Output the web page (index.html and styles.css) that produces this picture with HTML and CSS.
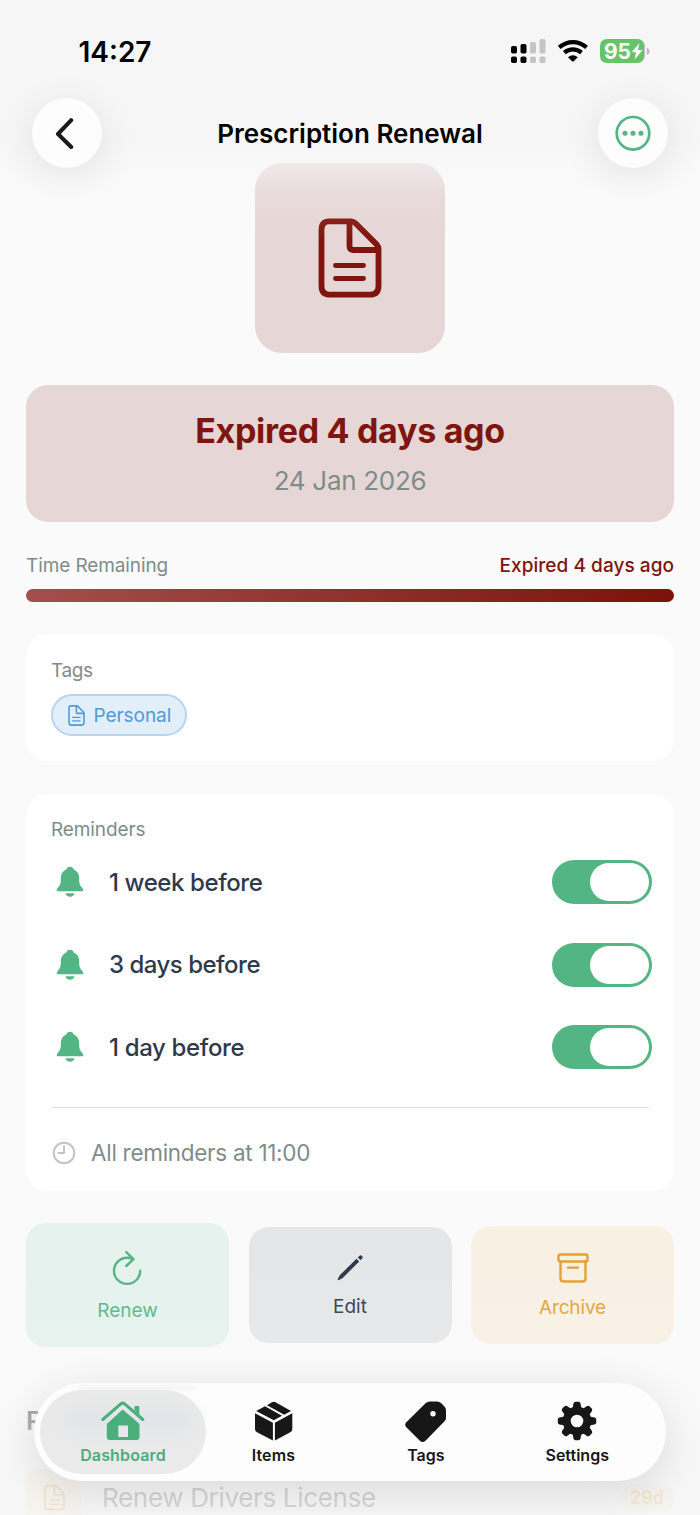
FILE: index.html
```html
<!DOCTYPE html>
<html lang="en">
<head>
<meta charset="utf-8">
<title>Prescription Renewal</title>
<link rel="stylesheet" href="styles.css">
</head>
<body>
<svg class="defs" width="0" height="0">
  <symbol id="doc" viewBox="0 0 64 80">
    <path d="M11 3.300H33Q35.500 3.300 37.500 5.300L58.800 26.600Q60.500 28.500 60.500 31V68Q60.500 76.700 51.800 76.700H12Q3.500 76.700 3.500 68V12Q3.500 3.300 11 3.300Z"/>
    <path d="M31.500 4V28Q31.500 32 35.500 32H59.500"/>
    <path class="doc-lines" d="M17.500 47.500H45.500M17.500 60.500H45.500"/>
  </symbol>
  <symbol id="bell" viewBox="0 0 28 32">
    <path d="M14 .7C16 .7 17.400 1.900 17.700 3.400C21.500 5 23.200 8.300 23.200 12V14.500C23.200 18.500 24.600 20 26.300 22C28 24 27.500 25.200 25.800 25.200H2.200C.5 25.200 0 24 1.700 22C3.400 20 4.800 18.500 4.800 14.500V12C4.800 8.300 6.500 5 10.300 3.400C10.600 1.900 12 .7 14 .7ZM9.500 27.200H18.500C18 29.400 16.300 30.700 14 30.700S10 29.400 9.500 27.200Z"/>
  </symbol>
</svg>
<div class="screen">
  <main class="content">
    <div class="hero"><svg class="hero-icon" width="64" height="80"><use href="#doc"/></svg></div>
    <section class="status">
      <h1 class="status-title">Expired 4 days ago</h1>
      <div class="status-date">24 Jan 2026</div>
    </section>
    <div class="remaining">
      <span class="remaining-label">Time Remaining</span>
      <span class="remaining-value">Expired 4 days ago</span>
    </div>
    <div class="progress"></div>
    <section class="card tags">
      <h2 class="card-title tags-title">Tags</h2>
      <div class="chip"><svg class="chip-icon" width="17" height="21"><use href="#doc"/></svg><span class="chip-text">Personal</span></div>
    </section>
    <section class="card reminders">
      <h2 class="card-title reminders-title">Reminders</h2>
      <div class="row"><svg class="bell" width="28" height="32"><use href="#bell"/></svg><span class="row-text week">1 week before</span><span class="toggle"><i class="knob"></i></span></div>
      <div class="row"><svg class="bell" width="28" height="32"><use href="#bell"/></svg><span class="row-text days">3 days before</span><span class="toggle"><i class="knob"></i></span></div>
      <div class="row"><svg class="bell" width="28" height="32"><use href="#bell"/></svg><span class="row-text day">1 day before</span><span class="toggle"><i class="knob"></i></span></div>
      <div class="at">
        <svg class="clock" width="24" height="24" viewBox="0 0 24 24"><circle cx="12" cy="12" r="10.300"/><path d="M12 5.200V12H6.500"/></svg>
        <span class="at-text">All reminders at 11:00</span>
      </div>
    </section>
    <div class="actions">
      <div class="action renew">
        <svg width="30" height="36" viewBox="0 0 30 36"><path d="M28.200 20.700A13.100 13.100 0 1 1 15 7.700Q18 7.700 21 8.800M14.200 2L21.500 9.200L14.200 16"/></svg>
        <span class="action-text">Renew</span>
      </div>
      <div class="action edit">
        <svg width="28" height="28" viewBox="0 0 28 28"><path d="M2.300 26.300L1.600 25.600L3.700 21.300L20.500 4.700L23.200 7.400L6.500 24.200ZM21.800 3.500L23.400 1.900Q24.700 .8 26 2T26.100 4.600L24.500 6.200Z"/></svg>
        <span class="action-text">Edit</span>
      </div>
      <div class="action archive">
        <svg width="32" height="30" viewBox="0 0 32 30"><rect x="1.500" y="1.500" width="29" height="7" rx="1.800"/><path d="M3.500 8.500V25.500Q3.500 28.500 6.500 28.500H25.500Q28.500 28.500 28.500 25.500V8.500M11 14.600H21"/></svg>
        <span class="action-text">Archive</span>
      </div>
    </div>
    <h2 class="related">Related Items</h2>
    <div class="related-row">
      <div class="related-icon"><svg width="21" height="27"><use href="#doc"/></svg></div>
      <span class="related-text">Renew Drivers License</span>
      <span class="badge">29d</span>
    </div>
  </main>

  <header class="top">
    <div class="statusbar">
      <span class="time">14:27</span>
      <svg class="system" width="140" height="26" viewBox="0 0 140 26">
        <g><rect x="1" y="7" width="6" height="7.500" rx="1.800"/><rect x="10.500" y="5" width="6" height="9.500" rx="1.800"/><rect x="1" y="17.500" width="6" height="6.500" rx="1.800"/><rect x="10.500" y="17.500" width="6" height="6.500" rx="1.800"/></g>
        <g fill="#c5c5c5"><rect x="20" y="3" width="6" height="11.500" rx="1.800"/><rect x="29.500" y="0" width="6" height="14.500" rx="1.800"/><rect x="20" y="17.500" width="6" height="6.500" rx="1.800"/><rect x="29.500" y="17.500" width="6" height="6.500" rx="1.800"/></g>
        <g fill="none" stroke="#000" stroke-width="4.200"><path d="M49.200 8.300Q55.500 3.100 62.900 3.100T76.600 8.300"/><path d="M54.300 13.600Q58.200 10.400 62.900 10.400T71.500 13.600"/></g>
        <path d="M58 18.200Q60.400 16.300 62.900 16.300T67.800 18.200L63.700 22.300Q62.900 23 62.100 22.300Z"/>
        <path fill="#bfb6c1" d="M136.800 8.500Q139.500 9.500 139.500 12.300T136.800 16Z"/>
        <rect x="95" y="0" width="40" height="24" rx="7.500" fill="#c4b9c6"/>
        <path fill="#65c466" d="M97.500 0H126.500Q134 0 134 7.500V16.500Q134 24 126.500 24H97.500Q90 24 90 16.500V7.500Q90 0 97.500 0Z"/>
        <text class="battery" x="94" y="19.700" textLength="27">95</text>
        <path fill="#fff" d="M129.500 4L121.500 13.300H126L124.600 20.500L132.500 11H128Z"/>
      </svg>
    </div>
    <nav class="nav">
      <div class="round"><svg width="20" height="32" viewBox="0 0 20 32"><path d="M16.200 3.200L3 17L16.200 30" fill="none" stroke="#1a1a1a" stroke-width="4" stroke-linecap="round" stroke-linejoin="round"/></svg></div>
      <span class="nav-title">Prescription Renewal</span>
      <div class="round"><svg width="36" height="36" viewBox="0 0 36 36" fill="#54b584"><circle cx="18" cy="18.300" r="16.300" fill="none" stroke="#54b584" stroke-width="2.700"/><circle cx="10" cy="18.300" r="2.500"/><circle cx="18" cy="18.300" r="2.500"/><circle cx="26" cy="18.300" r="2.500"/></svg></div>
    </nav>
  </header>

  <div class="bottom-fade"></div>
  <nav class="tabbar">
    <div class="ghost-line"></div>
    <div class="tab active">
      <div class="glow"></div>
      <svg width="44" height="40" viewBox="0 0 44 40"><path d="M21.700 8.500L38.500 23V36Q38.500 39 35.500 39H9Q5.800 39 5.800 36V23ZM17.300 24.500V36H27V24.500Z" fill-rule="evenodd"/><path d="M1.800 18.500L19.500 3.100Q21.700 1.200 23.900 3.100L41.800 18.500" fill="none" stroke="#4bae7d" stroke-width="3" stroke-linecap="round"/><path d="M33.500 9V6Q33.500 5 34.500 5H37.300Q38.300 5 38.300 6V14Z"/></svg>
      <span class="tab-text dash">Dashboard</span>
    </div>
    <div class="tab">
      <svg width="38" height="40" viewBox="0 0 38 40"><path d="M0 12.200L17.900 21.700V39.400L2 31.300Q0 30.200 0 28ZM19.900 21.700L37.300 12.200V28Q37.300 30.200 35.300 31.300L19.900 39.400ZM1.200 10L10 5.300L27 14.700L18.800 19.300ZM12 4.200L17 1.300Q18.800 .3 20.600 1.300L36 10L29.200 13.700Z"/></svg>
      <span class="tab-text items">Items</span>
    </div>
    <div class="tab">
      <svg width="42" height="42" viewBox="0 0 42 42"><path fill-rule="evenodd" d="M25 .5H32Q34.300 .5 36 2L39.500 5.500Q41 7 41 9.300V17Q41 18.800 39.500 20.300L20.500 39.800Q17.700 42.300 14.900 39.800L1.300 26.300Q-1 23.800 1.300 21.300L20.800 2Q22.500 .5 25 .5ZM28 10A2.700 2.700 0 1 0 28 15.400A2.700 2.700 0 1 0 28 10Z"/></svg>
      <span class="tab-text tagt">Tags</span>
    </div>
    <div class="tab">
      <svg width="40" height="40" viewBox="-20 -20 40 40"><defs><path id="tooth" d="M-4.600 -12L-3.500 -17.600Q-3.100 -19.200 -1.600 -19.200H1.600Q3.100 -19.200 3.500 -17.600L4.600 -12Z"/></defs><circle r="10.300" fill="none" stroke="#171717" stroke-width="8"/><use href="#tooth"/><use href="#tooth" transform="rotate(45)"/><use href="#tooth" transform="rotate(90)"/><use href="#tooth" transform="rotate(135)"/><use href="#tooth" transform="rotate(180)"/><use href="#tooth" transform="rotate(225)"/><use href="#tooth" transform="rotate(270)"/><use href="#tooth" transform="rotate(315)"/></svg>
      <span class="tab-text sett">Settings</span>
    </div>
  </nav>
</div>
</body>
</html>
```
FILE: styles.css
```css
* { box-sizing: border-box; }
body { margin: 0; background: #fafafa; font-family: Inter, "Liberation Sans", sans-serif; }
h1, h2 { margin: 0; font-weight: 400; }
svg { display: block; flex: none; }
span { white-space: nowrap; }
.defs { position: absolute; }
.doc-lines { stroke-width: 4.900; }
.screen { position: relative; width: 700px; height: 1515px; overflow: hidden; background: #fafafa; }
.content { padding: 162.500px 26px 0; }

.hero { width: 190px; height: 190px; margin: 0 auto 32.500px; border-radius: 27px; background: #e6d6d6; display: flex; align-items: center; justify-content: center; }
.hero-icon { stroke: #7f150e; fill: none; stroke-width: 5.800; stroke-linecap: round; stroke-linejoin: round; margin-top: 1px; }

.status { height: 137px; border-radius: 22px; background: #e6d6d6; text-align: center; padding-top: 24px; }
.status-title { font-size: 34px; line-height: 44px; font-weight: 700; color: #7f150e; letter-spacing: -.3px; }
.status-date { font-size: 26px; line-height: 32px; margin-top: 12px; color: #7f8c8a; letter-spacing: -.3px; }

.remaining { margin-top: 32px; display: flex; justify-content: space-between; font-size: 19px; line-height: 24px; }
.remaining-label { color: #7f8c8a; letter-spacing: -.1px; }
.remaining-value { color: #7f150e; font-weight: 500; letter-spacing: .05px; }
.progress { margin-top: 11px; height: 13px; border-radius: 7px; background: linear-gradient(90deg, #a34f4d, #7b120b); }

.card { background: #fff; border-radius: 21px; padding: 25px 25px 0; }
.card-title { font-size: 19px; line-height: 24px; color: #7f8c8a; letter-spacing: -.1px; }
.tags { margin-top: 32px; height: 127px; }
.tags-title { letter-spacing: -.4px; }
.chip { margin-top: 11px; width: 136px; height: 42px; border: 2px solid #b5d5f1; border-radius: 21px; background: #e2eef8; display: flex; align-items: center; padding-left: 15px; gap: 8.500px; font-size: 19px; letter-spacing: -.05px; color: #5099dc; }
.chip-icon { fill: none; stroke: #5099dc; stroke-width: 6; stroke-linecap: round; stroke-linejoin: round; }
.reminders { margin-top: 33px; height: 397px; padding-top: 24px; }
.row { height: 44px; margin-bottom: 38.500px; display: flex; align-items: center; padding-left: 5px; margin-right: -3px; }
.reminders-title { margin-bottom: 18px; }
.bell { fill: #54b584; }
.row-text { margin-left: 25px; font-size: 24px; font-weight: 500; color: #2c3a4c; }
.week { letter-spacing: -.4px; }
.days { letter-spacing: -.5px; }
.day { letter-spacing: -.35px; }
.toggle { margin-left: auto; width: 100px; height: 44px; border-radius: 22px; background: #54b584; padding: 3px; display: flex; justify-content: flex-end; }
.knob { width: 59px; height: 38px; border-radius: 19px; background: #fff; }
.at { border-top: 1.500px solid #dedfe0; height: 84px; margin-top: -1px; padding-top: 8px; display: flex; align-items: center; padding-left: 1px; gap: 15px; font-size: 22.500px; letter-spacing: -.29px; color: #7f8c8a; }
.at-text { margin-top: -2px; }
.clock { fill: none; stroke: #c0c4c6; stroke-width: 2; stroke-linecap: round; stroke-linejoin: round; }

.actions { margin-top: 32px; height: 124px; display: grid; grid-template-columns: repeat(3, 203px); justify-content: space-between; align-items: center; }
.action { border-radius: 20px; display: flex; flex-direction: column; align-items: center; font-size: 19px; line-height: 24px; }
.action svg { fill: none; stroke: currentColor; stroke-width: 2.400; stroke-linecap: round; stroke-linejoin: round; }
.renew { height: 124px; padding-top: 27px; gap: 13px; background: #e5f2ed; color: #54b584; }
.renew svg { margin-right: 2px; }
.edit { height: 116px; padding-top: 27px; gap: 13px; background: #e5e6e8; color: #2c3a4c; }
.edit svg { fill: currentColor; stroke: none; }
.archive { height: 118px; padding-top: 27px; gap: 13px; background: #f8f0e3; color: #e4a035; letter-spacing: -.15px; }

.related { margin-top: 58px; font-size: 26px; line-height: 32px; font-weight: 600; color: #7e858e; }
.related-row { margin-top: 32px; height: 57px; display: flex; align-items: center; }
.related-icon { width: 56px; height: 57px; border-radius: 12px; background: #faecd3; display: flex; align-items: center; justify-content: center; }
.related-icon svg { fill: none; stroke: #dd942a; stroke-width: 6; stroke-linejoin: round; stroke-linecap: round; }
.related-text { margin-left: 20px; font-size: 26px; letter-spacing: -.33px; color: #2c3a4c; }
.badge { margin-left: auto; width: 54px; height: 28px; border-radius: 14px; background: #f9eedb; color: #e4a035; font-size: 18px; line-height: 28px; font-weight: 600; text-align: center; }

.top { position: absolute; inset: 0 0 auto; height: 260px; background: linear-gradient(180deg, #f6f6f6 0, #f6f6f6 140px, rgba(247,247,247,.6) 162px, rgba(248,248,248,.4) 176px, rgba(249,249,249,.12) 196px, rgba(250,250,250,0) 240px); }
.statusbar { height: 98px; display: flex; justify-content: space-between; padding: 39px 50px 0 78.500px; }
.time { font-size: 28px; line-height: 26px; font-weight: 600; }
.battery { font: 700 21px Inter, sans-serif; fill: #fff; }
.nav { display: flex; justify-content: space-between; align-items: center; padding: 0 32px; }
.round { width: 70px; height: 70px; border-radius: 50%; background: #fdfdfd; box-shadow: 0 8px 40px rgba(0,0,0,.09); display: flex; align-items: center; justify-content: center; }
.round:first-child svg { margin-right: 5px; }
.nav-title { font-size: 26px; line-height: 32px; font-weight: 600; padding-top: 2px; }

.bottom-fade { position: absolute; inset: auto 0 0; height: 250px; background: linear-gradient(180deg, rgba(248,248,248,0), rgba(248,248,248,.15) 90px, rgba(247,247,247,.35) 155px, rgba(246,246,246,.8) 215px, rgba(246,246,246,.84)); }
.tabbar { position: absolute; left: 34px; top: 1383px; width: 632px; height: 98px; border-radius: 49px; background: #fdfdfd; box-shadow: 0 10px 45px rgba(0,0,0,.12); display: flex; padding: 7px 6px; overflow: visible; }
.tab { position: relative; width: 166px; margin-right: -14.600px; height: 84px; border-radius: 42px; display: flex; flex-direction: column; align-items: center; font-size: 16px; font-weight: 600; line-height: 20px; color: #171717; padding-top: 11px; }
.tab svg { fill: currentColor; position: relative; margin-bottom: auto; }
.tab-text { position: relative; margin-bottom: 9.500px; }
.dash { letter-spacing: .15px; }
.items { letter-spacing: .15px; margin-right: 2px; }
.active { color: #4bae7d; background: #eaeaea; }
.glow { position: absolute; left: 22px; right: 10px; top: 20px; height: 20px; background: #dfe4e9; filter: blur(9px); border-radius: 10px; }
.ghost-line { position: absolute; left: 45px; top: 3px; width: 115px; height: 4px; background: #eef1f5; filter: blur(2px); }
```
